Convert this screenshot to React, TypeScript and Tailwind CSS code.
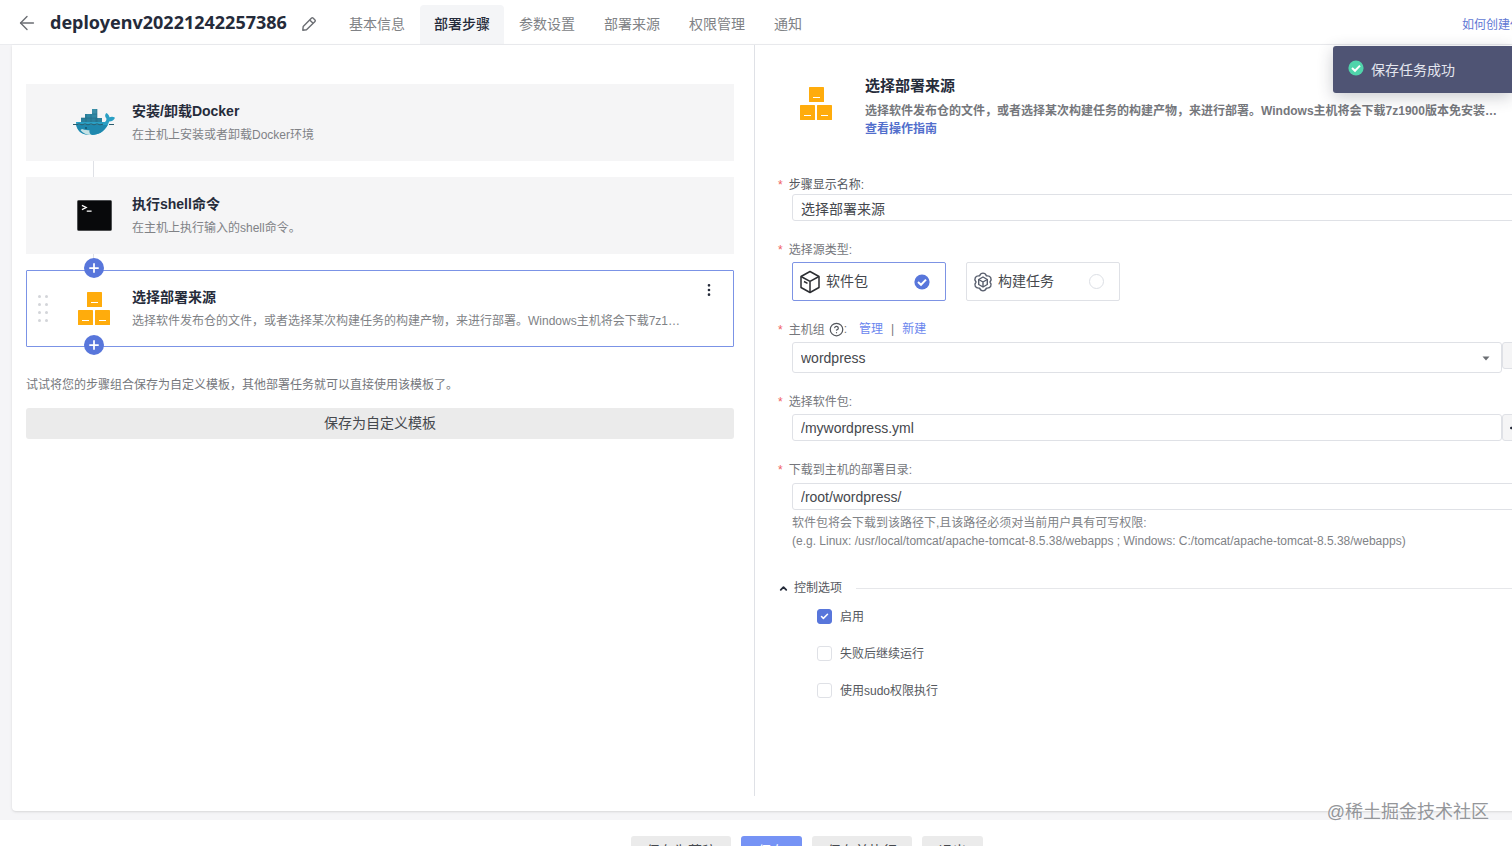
import React, { useState } from 'react';
import { ArrowLeft, Check, ChevronUp, CircleHelp, MoreHorizontal, MoreVertical, Plus } from 'lucide-react';

const TABS = ['基本信息', '部署步骤', '参数设置', '部署来源', '权限管理', '通知'];

const DockerIcon = () => (
    <svg width="44" height="30" viewBox="0 0 44 30" aria-hidden="true">
        <path d="M20 1h5v5h-5z" fill="#3b8fa8" />
        <path d="M13 6h12v5H13z" fill="#2f87a3" />
        <path d="M9 10h21v5H9z" fill="#2b7f9c" />
        <path d="M14 6v9M19 6v9M20 6h5M25 1v14M9 10h16M24 10v5" stroke="#1f6b86" strokeWidth=".6" fill="none" />
        <path d="M4 14h29c1-1 1.600-2 1.400-3.500C32.500 8.500 33 6.500 34.200 5c2 1 3.200 2.600 3.200 4.300 2-.8 4-.7 5.600.4-.8 2.300-3 3.600-5.800 3.700C34.400 21.500 28.500 27 19 27 9 27 4 22.500 4 14z" fill="#2a9fc4" />
        <path d="M4.200 17h31.500c-3.500 6.500-9 10-16.700 10C10.500 27 5.500 23.500 4.200 17z" fill="#1f88ae" />
        <path d="M10 21c3 1.500 6 1 7.500 1.200C17 24.500 18 26 20 27c-5.500.2-9.500-2-11.500-5z" fill="#c5e2e5" />
        <circle cx="14" cy="20" r="1" fill="#14536c" />
        <path d="M1 16.500h4l2-.6 3 .9 3-.9 3 .9 3-.9 3 .9 3-.9 3 .9 3-.6M37 16.500h5" stroke="#2c5d6e" strokeWidth="1" fill="none" />
    </svg>
);

const ShellIcon = () => (
    <svg width="35" height="31" viewBox="0 0 36 32" aria-hidden="true">
        <rect x=".5" y=".5" width="35" height="31" rx="1" fill="#08090b" stroke="#4a4c4e" />
        <path d="M5 5.500l4.500 2.300L5 10" stroke="#fff" strokeWidth="1.300" fill="none" />
        <path d="M10 11.500h5" stroke="#fff" strokeWidth="1.300" />
    </svg>
);

const BoxesIcon = () => (
    <svg width="34" height="34" viewBox="0 0 34 34" aria-hidden="true">
        <g fill="#ffac0c">
            <rect x="10" y="0" width="15" height="15" rx=".6" />
            <rect x="1" y="18" width="15" height="15" rx=".6" />
            <rect x="18" y="18" width="15" height="15" rx=".6" />
        </g>
        <path d="M14 10.500h7M5 28.500h7M22 28.500h7" stroke="#fff" strokeWidth="1.200" />
    </svg>
);

const PencilIcon = () => (
    <svg width="16" height="16" viewBox="0 0 16 16" fill="none" stroke="#6b6e73" strokeWidth="1.400" strokeLinejoin="round" aria-hidden="true">
        <path d="M1.800 14.200l.4-3.700L10.600 2a1 1 0 0 1 1.400 0L14 4a1 1 0 0 1 0 1.400L5.500 13.800z" />
        <path d="M8.700 3.900l3.400 3.400" />
    </svg>
);

const PackageIcon = () => (
    <svg width="22" height="24" viewBox="0 0 22 24" fill="none" stroke="#2b2d31" strokeWidth="1.500" strokeLinejoin="round" aria-hidden="true">
        <path d="M11 1.500l9 5v11l-9 5-9-5v-11z" />
        <path d="M2 6.500l9 4.800 9-4.800M11 11.300v11M5 11.500l3.500 1.800" />
    </svg>
);

const BuildIcon = () => (
    <svg width="20" height="20" viewBox="0 0 20 20" fill="none" stroke="#575d6c" strokeWidth="1.400" strokeLinejoin="round" aria-hidden="true">
        <path d="M6.500 3.900C8 .2 12 .2 13.500 3.900 17.500 3.400 19.500 6.800 17 10 19.500 13.200 17.500 16.600 13.500 16.100 12 19.800 8 19.800 6.500 16.100 2.500 16.600 .5 13.200 3 10 .5 6.800 2.500 3.400 6.500 3.900z" />
        <path d="M10 5l4.300 2.500v5L10 15l-4.300-2.500v-5z" />
        <path d="M5.700 7.500L10 10l4.300-2.500M10 10v5" />
    </svg>
);

const CheckCircle: React.FC<{ color: string }> = ({ color }) => (
    <svg width="16" height="16" viewBox="0 0 16 16" aria-hidden="true">
        <circle cx="8" cy="8" r="7.600" fill={color} />
        <path d="M4 8l3 2.800 5-5.200" stroke="#fff" strokeWidth="2" fill="none" />
    </svg>
);

const StepCard: React.FC<{ icon: React.ReactNode; title: string; desc: string }> = ({ icon, title, desc }) => (
    <div className="flex h-[77px] items-center bg-[#f5f5f6]">
        <div className="flex w-[106px] justify-center pl-[30px]">{icon}</div>
        <div>
            <h3 className="text-sm leading-6 font-bold text-[#252b3a]">{title}</h3>
            <p className="text-xs leading-6 text-[#808286]">{desc}</p>
        </div>
    </div>
);

const AddButton: React.FC<{ className: string }> = ({ className }) => (
    <button
        type="button"
        aria-label="添加步骤"
        className={`absolute left-[57px] flex size-5 items-center justify-center rounded-full bg-[#5876db] text-white ${className}`}
    >
        <Plus size={14} strokeWidth={3} />
    </button>
);

const FieldLabel: React.FC<{ htmlFor?: string; id?: string; text: string; className?: string }> = ({ htmlFor, id, text, className = 'text-[#75777c]' }) => (
    <label htmlFor={htmlFor} id={id} className={`flex h-5 items-center gap-1.5 pt-0.5 text-xs ${className}`}>
        <span className="text-[#f0605f]">*</span>
        <span>{text}</span>
    </label>
);

const SourceOption: React.FC<{
    icon: React.ReactNode;
    label: string;
    checked: boolean;
    onSelect: () => void;
}> = ({ icon, label, checked, onSelect }) => (
    <label
        className={`flex h-[39px] w-[154px] items-center gap-[5px] rounded-xs border pr-[15px] pl-1.5 text-sm text-[#45484d] ${checked ? 'border-[#7d93e4]' : 'border-[#dfe1e6]'}`}
    >
        {icon}
        <span className="flex-1 pb-0.5">{label}</span>
        <input type="radio" name="source" checked={checked} onChange={onSelect} className="sr-only" />
        {checked ? <CheckCircle color="#5876db" /> : <span className="size-[15px] rounded-full border border-[#dcdfe5]" />}
    </label>
);

const Option: React.FC<{ label: string; defaultChecked?: boolean }> = ({ label, defaultChecked }) => (
    <label className="flex h-[17px] items-center gap-2 text-xs text-[#55585e]">
        <span className="relative flex size-[15px]">
            <input
                type="checkbox"
                defaultChecked={defaultChecked}
                className="peer size-[15px] appearance-none rounded-[3px] border border-[#dfe1e6] bg-white checked:border-[#5876db] checked:bg-[#5876db]"
            />
            <Check size={9} strokeWidth={4} className="pointer-events-none absolute top-[3px] left-[3px] hidden text-white peer-checked:block" />
        </span>
        {label}
    </label>
);

const inputClass = 'h-[27px] w-full rounded-[3px] border border-[#dfe1e6] bg-white px-2 text-sm text-[#45484d] outline-none';

const StepList = () => (
    <section className="pt-[39px] pr-5 pl-3.5">
        <StepCard icon={<DockerIcon />} title="安装/卸载Docker" desc="在主机上安装或者卸载Docker环境" />
        <div className="ml-[67px] h-4 w-px bg-[#dfe1e6]" />
        <StepCard icon={<ShellIcon />} title="执行shell命令" desc="在主机上执行输入的shell命令。" />
        <div className="ml-[67px] h-4 w-px bg-[#dfe1e6]" />
        <div className="relative flex h-[77px] items-center rounded-[1px] border border-[#7b93e6] bg-white">
            <AddButton className="-top-[13px]" />
            <div className="flex w-[105px] items-center pl-[11px]">
                <div className="grid grid-cols-2 gap-x-[4px] gap-y-[5px]">
                    {[...Array(8)].map((_, i) => (
                        <span key={i} className="size-[3px] rounded-full bg-[#d3d5d9]" />
                    ))}
                </div>
                <div className="ml-[29px]"><BoxesIcon /></div>
            </div>
            <div className="whitespace-nowrap">
                <h3 className="text-sm leading-6 font-bold text-[#252b3a]">选择部署来源</h3>
                <p className="text-xs leading-6 text-[#808286]">选择软件发布仓的文件，或者选择某次构建任务的构建产物，来进行部署。Windows主机将会下载7z1…</p>
            </div>
            <button type="button" aria-label="更多" className="mr-4 mb-[38px] ml-auto text-[#252b3a]">
                <MoreVertical size={16} strokeWidth={2} />
            </button>
            <AddButton className="-bottom-[9px]" />
        </div>
        <p className="mt-7 text-xs leading-5 text-[#75777c]">试试将您的步骤组合保存为自定义模板，其他部署任务就可以直接使用该模板了。</p>
        <button type="button" className="mt-[13px] h-[31px] w-full rounded-[3px] bg-[#ebebeb] pb-0.5 text-sm text-[#45484d]">保存为自定义模板</button>
    </section>
);

const StepForm = () => {
    const [source, setSource] = useState('package');

    return (
        <section className="mb-[15px] border-l border-[#dfe1e6] pt-[29px] pr-[72px] pl-[23px]">
            <div className="flex">
                <div className="w-[87px] shrink-0 pt-[13px] pl-[21px]"><BoxesIcon /></div>
                <div className="text-xs leading-[18px] font-bold whitespace-nowrap">
                    <h2 className="mb-1 text-[15px] leading-6 text-[#252b3a]">选择部署来源</h2>
                    <p className="text-[#75777c]">选择软件发布仓的文件，或者选择某次构建任务的构建产物，来进行部署。Windows主机将会下载7z1900版本免安装…</p>
                    <a href="#guide" className="text-[#526ecc]">查看操作指南</a>
                </div>
            </div>

            <div className="mt-9 flex flex-col gap-[18px]">
                <div>
                    <FieldLabel htmlFor="step-name" text="步骤显示名称:" className="text-[#55585e]" />
                    <div className="pl-3.5">
                        <input id="step-name" defaultValue="选择部署来源" className={inputClass} />
                    </div>
                </div>

                <div role="radiogroup" aria-labelledby="source-label">
                    <FieldLabel id="source-label" text="选择源类型:" />
                    <div className="mt-[3px] flex gap-5 pl-3.5">
                        <SourceOption icon={<PackageIcon />} label="软件包" checked={source === 'package'} onSelect={() => setSource('package')} />
                        <SourceOption icon={<BuildIcon />} label="构建任务" checked={source === 'build'} onSelect={() => setSource('build')} />
                    </div>
                </div>

                <div>
                    <div className="flex items-center text-xs text-[#75777c]">
                        <FieldLabel htmlFor="host-group" text="主机组" />
                        <CircleHelp size={15} className="ml-1 text-[#55585e]" />
                        <span>:</span>
                        <a href="#manage" className="ml-3 text-[#6a86ee]">管理</a>
                        <span className="mx-2">|</span>
                        <a href="#create" className="text-[#6a86ee]">新建</a>
                    </div>
                    <div className="mt-[3px] flex items-start pl-3.5">
                        <div className="relative flex-1">
                            <select
                                id="host-group"
                                className="block h-[31px] w-full appearance-none rounded-[3px] border border-[#dfe1e6] bg-white px-2 text-sm text-[#45484d] outline-none"
                            >
                                <option>wordpress</option>
                            </select>
                            <svg width="8" height="5" viewBox="0 0 8 5" className="pointer-events-none absolute top-[14px] right-3" aria-hidden="true">
                                <path d="M.5.500h7L4 4.500z" fill="#6b6e73" />
                            </svg>
                        </div>
                        <button type="button" aria-label="刷新" className="h-[27px] w-7 rounded-[3px] border border-[#dfe1e6] bg-[#f5f5f6]" />
                    </div>
                </div>

                <div>
                    <FieldLabel htmlFor="package-path" text="选择软件包:" />
                    <div className="mt-[3px] flex pl-3.5">
                        <input id="package-path" defaultValue="/mywordpress.yml" className={inputClass} />
                        <button
                            type="button"
                            aria-label="浏览"
                            className="flex h-[27px] w-7 shrink-0 items-center justify-center rounded-[3px] border border-[#dfe1e6] bg-[#f5f5f6] text-[#252b3a]"
                        >
                            <MoreHorizontal size={16} />
                        </button>
                    </div>
                </div>

                <div>
                    <FieldLabel htmlFor="target-dir" text="下载到主机的部署目录:" />
                    <div className="mt-1 pl-3.5">
                        <input id="target-dir" defaultValue="/root/wordpress/" className={inputClass} />
                        <p className="mt-1 text-xs leading-[18px] text-[#808286]">
                            软件包将会下载到该路径下,且该路径必须对当前用户具有可写权限:
                            <br />
                            (e.g. Linux: /usr/local/tomcat/apache-tomcat-8.5.38/webapps ; Windows: C:/tomcat/apache-tomcat-8.5.38/webapps)
                        </p>
                    </div>
                </div>
            </div>

            <div className="mt-7 flex items-center">
                <button type="button" className="flex items-center gap-[5px] text-xs leading-5 text-[#55585e]">
                    <ChevronUp size={11} strokeWidth={4} className="text-[#252b3a]" />
                    控制选项
                </button>
                <div className="ml-3.5 h-px flex-1 bg-[#e6e7ea]" />
            </div>
            <div className="mt-2.5 flex flex-col items-start gap-5 pl-[39px]">
                <Option label="启用" defaultChecked />
                <Option label="失败后继续运行" />
                <Option label="使用sudo权限执行" />
            </div>
        </section>
    );
};

const App: React.FC = () => {
    return (
        <div className="relative h-screen overflow-hidden bg-white font-['Liberation_Sans','Noto_Sans_CJK_SC',sans-serif]">
            {/* The page is wider than the window and runs off its right edge */}
            <div className="-mr-[102px] flex flex-col">
                <header className="flex h-[45px] items-end border-b border-[#ebecef] pl-4">
                    <button type="button" aria-label="返回" className="mb-2.5 text-[#6b6e73]">
                        <ArrowLeft size={22} strokeWidth={1.5} />
                    </button>
                    <h1 className="mb-2 ml-3 font-['Noto_Sans','Open_Sans',sans-serif] text-lg leading-7 font-bold text-[#252b3a]">deployenv20221242257386</h1>
                    <button type="button" aria-label="编辑名称" className="mb-3 ml-3.5"><PencilIcon /></button>
                    <nav className="ml-[18px] flex gap-px">
                        {TABS.map((tab, i) => (
                            <a
                                key={tab}
                                href={`#tab-${i}`}
                                className={`flex h-[39px] items-center rounded-t-sm px-3.5 pb-0.5 text-sm ${i === 1 ? 'bg-[#f4f5f7] font-medium text-[#252b3a]' : 'text-[#808286]'}`}
                            >
                                {tab}
                            </a>
                        ))}
                    </nav>
                    <a href="#help" className="mr-20 mb-2.5 ml-auto text-xs leading-[18px] text-[#5f78d4]">如何创建任务</a>
                </header>

                <div className="bg-[#f5f5f7] px-3 pb-[9px]">
                    <main className="grid min-h-[766px] grid-cols-[7fr_8fr] rounded-b-sm bg-white shadow-sm">
                        <StepList />
                        <StepForm />
                    </main>
                </div>

                <footer className="flex justify-center gap-2.5 pt-4 text-sm text-[#45484d]">
                    <button type="button" className="h-[31px] w-[100px] rounded-[3px] bg-[#ebebeb] pb-0.5">保存为草稿</button>
                    <button type="button" className="h-[31px] w-[61px] rounded-[3px] bg-[#7693f5] pb-0.5 text-white">保存</button>
                    <button type="button" className="h-[31px] w-[100px] rounded-[3px] bg-[#ebebeb] pb-0.5">保存并执行</button>
                    <button type="button" className="h-[31px] w-[61px] rounded-[3px] bg-[#ebebeb] pb-0.5">退出</button>
                </footer>
            </div>

            <div role="status" className="absolute top-[46px] right-0 flex h-[47px] w-[179px] items-center gap-[7px] rounded-l-[3px] bg-[#4f5474] pl-[15px] text-sm text-[#e4e6ef] shadow-[0_4px_16px_rgba(37,43,58,0.24)]">
                <span className="mb-1"><CheckCircle color="#50d4ab" /></span>
                保存任务成功
            </div>

            <div className="absolute right-[23px] bottom-5 text-lg leading-7 text-[#94969a] [text-shadow:0_0_2px_#fff]">@稀土掘金技术社区</div>
        </div>
    );
};

export default App;
